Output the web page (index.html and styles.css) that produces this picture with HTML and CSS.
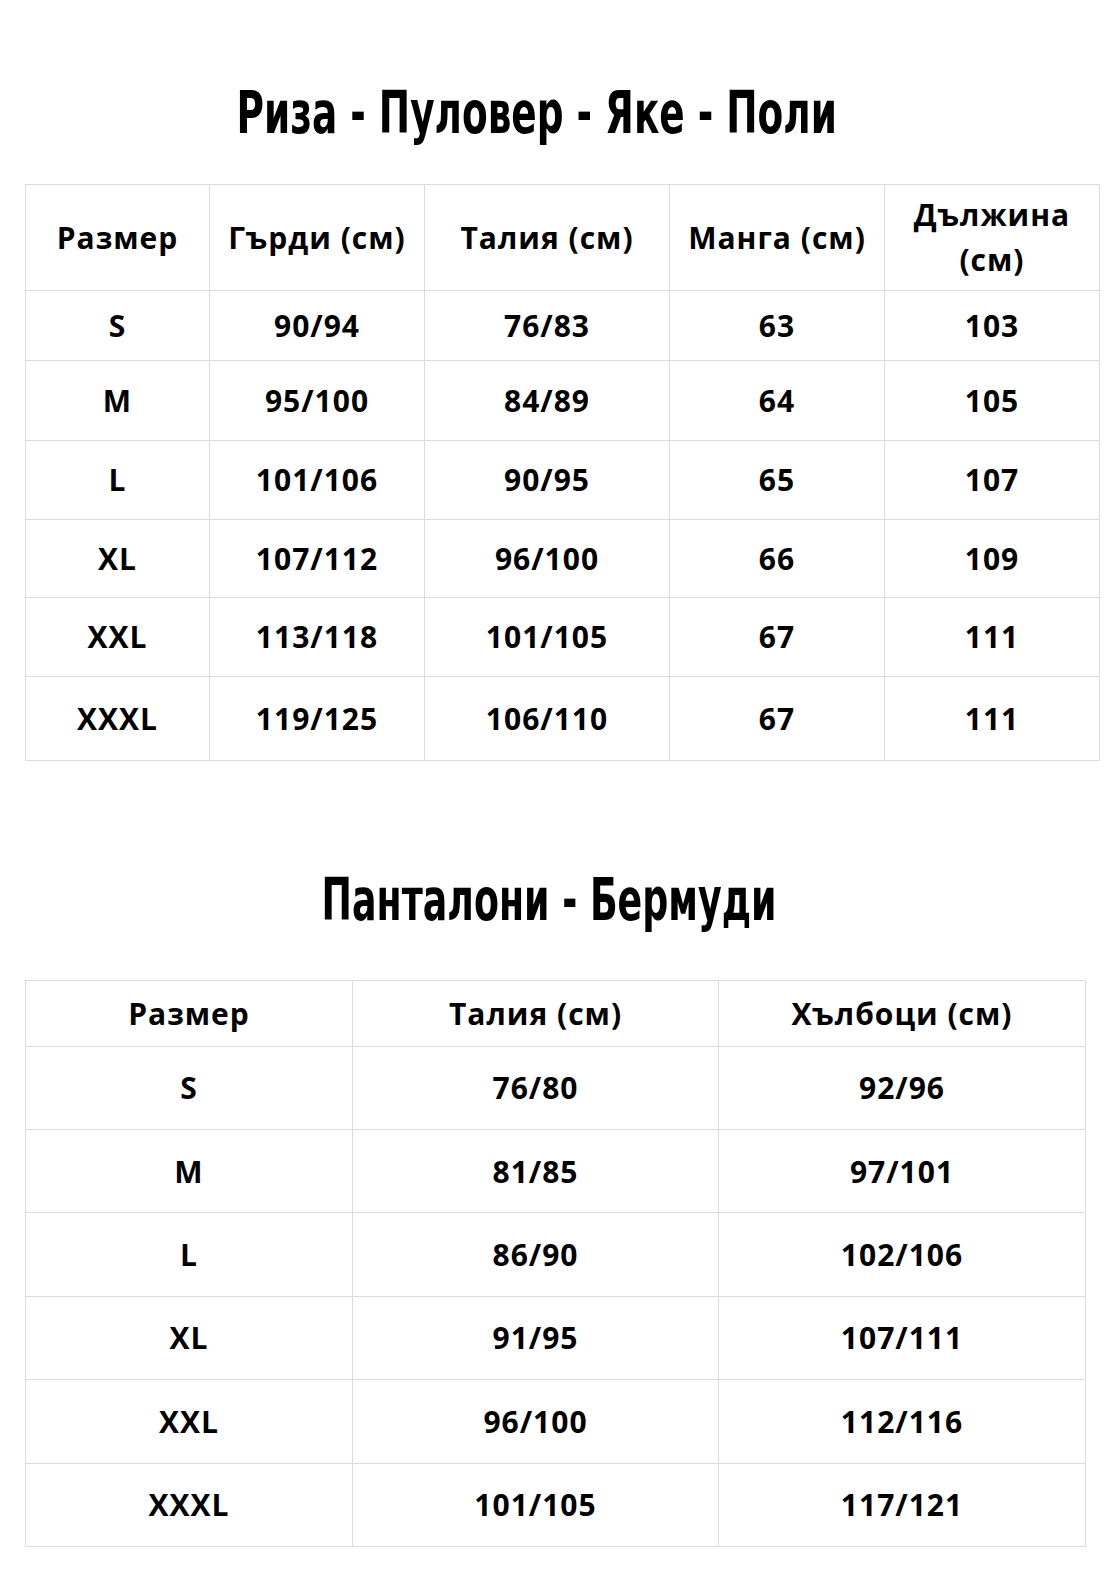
FILE: index.html
```html
<!DOCTYPE html>
<html lang="bg">
<head>
<meta charset="utf-8">
<title>Таблица с размери</title>
<link rel="stylesheet" href="styles.css">
</head>
<body>
<main class="page">
  <section class="block block-top">
    <h2 class="title title-one"><span class="title-text">Риза - Пуловер - Яке - Поли</span></h2>
    <table class="size-table t1">
      <colgroup>
        <col class="c1-a"><col class="c1-b"><col class="c1-c"><col class="c1-d"><col class="c1-e">
      </colgroup>
      <tr class="r-head"><td>Размер</td><td>Гърди (см)</td><td>Талия (см)</td><td>Манга (см)</td><td>Дължина (см)</td></tr>
      <tr class="r-s"><td>S</td><td>90/94</td><td>76/83</td><td>63</td><td>103</td></tr>
      <tr class="r-m"><td>M</td><td>95/100</td><td>84/89</td><td>64</td><td>105</td></tr>
      <tr class="r-l"><td>L</td><td>101/106</td><td>90/95</td><td>65</td><td>107</td></tr>
      <tr class="r-xl"><td>XL</td><td>107/112</td><td>96/100</td><td>66</td><td>109</td></tr>
      <tr class="r-xxl"><td>XXL</td><td>113/118</td><td>101/105</td><td>67</td><td>111</td></tr>
      <tr class="r-xxxl"><td>XXXL</td><td>119/125</td><td>106/110</td><td>67</td><td>111</td></tr>
    </table>
  </section>
  <section class="block block-bottom">
    <h2 class="title title-two"><span class="title-text">Панталони - Бермуди</span></h2>
    <table class="size-table t2">
      <colgroup>
        <col class="c2-a"><col class="c2-b"><col class="c2-c">
      </colgroup>
      <tr class="r2-head"><td>Размер</td><td>Талия (см)</td><td>Хълбоци (см)</td></tr>
      <tr><td>S</td><td>76/80</td><td>92/96</td></tr>
      <tr><td>M</td><td>81/85</td><td>97/101</td></tr>
      <tr><td>L</td><td>86/90</td><td>102/106</td></tr>
      <tr><td>XL</td><td>91/95</td><td>107/111</td></tr>
      <tr><td>XXL</td><td>96/100</td><td>112/116</td></tr>
      <tr><td>XXXL</td><td>101/105</td><td>117/121</td></tr>
    </table>
  </section>
</main>
</body>
</html>
```
FILE: styles.css
```css
html, body {
  margin: 0;
  padding: 0;
  background: #ffffff;
  color: #000000;
}

.page {
  width: 1060px;
  padding: 0 25px 50px;
  font-family: "Open Sans", "Noto Sans", sans-serif;
}

.block-top {
  padding-top: 78px;
}

.block-bottom {
  padding-top: 104px;
}

.title {
  margin: 0;
  font-family: "DejaVu Sans Condensed", "DejaVu Sans", sans-serif;
  font-stretch: condensed;
  font-weight: 700;
  font-size: 59px;
  line-height: 1.2;
  text-align: center;
  color: #000;
  white-space: nowrap;
}

.title-text {
  display: inline-block;
}

.title-one {
  margin-bottom: 35px;
  padding-right: 36px;
}

.title-one .title-text {
  transform: scaleX(0.705);
}

.title-two {
  margin-bottom: 44px;
  padding-right: 12px;
}

.title-two .title-text {
  transform: scaleX(0.685);
}

.size-table {
  border-collapse: collapse;
  table-layout: fixed;
}

.size-table td {
  border: 1px solid #dcdcdc;
  padding: 0 8px;
  text-align: center;
  vertical-align: middle;
  font-size: 30px;
  font-weight: 700;
  letter-spacing: 1px;
  line-height: 45px;
}

.t1 { width: 1074px; }
.c1-a { width: 184px; }
.c1-b { width: 215px; }
.c1-c { width: 245px; }
.c1-d { width: 215px; }
.c1-e { width: 215px; }

.t1 .r-head { height: 106px; }
.t1 .r-s { height: 70px; }
.t1 .r-m { height: 80px; }
.t1 .r-l { height: 79px; }
.t1 .r-xl { height: 78px; }
.t1 .r-xxl { height: 79px; }
.t1 .r-xxxl { height: 84px; }

.t2 { width: 1060px; }
.c2-a { width: 327px; }
.c2-b { width: 366px; }
.c2-c { width: 367px; }

.t2 tr { height: 83.4px; }
.t2 .r2-head { height: 66px; }
```
